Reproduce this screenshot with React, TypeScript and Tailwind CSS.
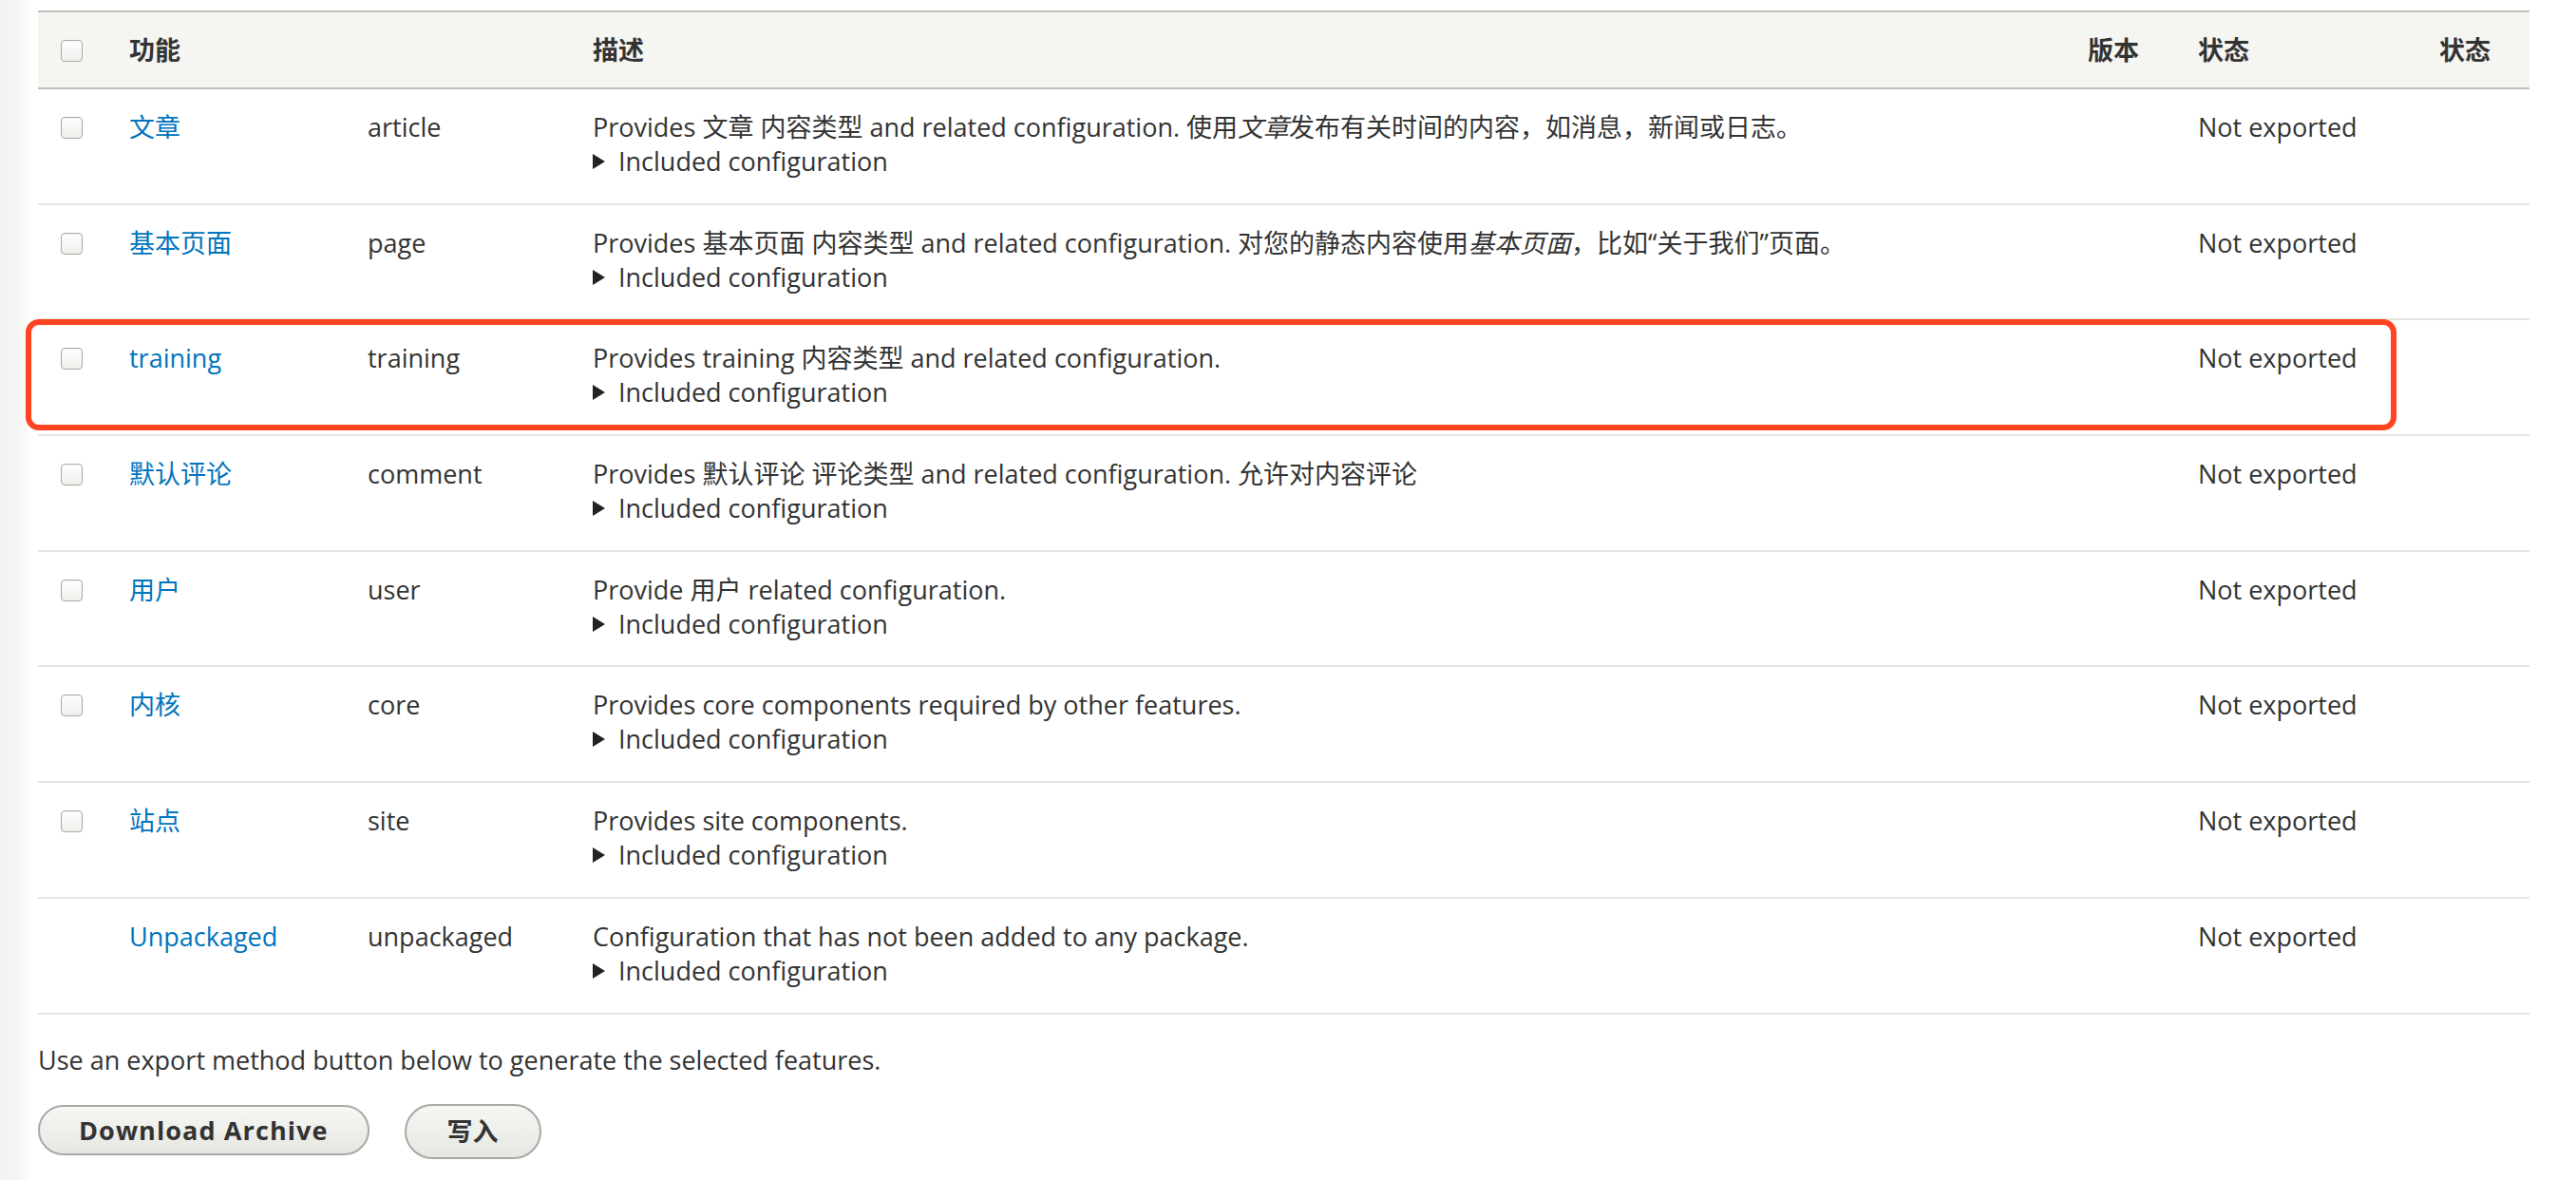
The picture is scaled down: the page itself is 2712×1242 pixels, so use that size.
import { ReactNode } from "react";

type FeatureRow = {
  id: string;
  name: string;
  machine: string;
  description: ReactNode;
  selectable?: boolean;
  highlighted?: boolean;
};

const rows: FeatureRow[] = [
  {
    id: "article",
    name: "文章",
    machine: "article",
    description: (
      <>
        Provides 文章 内容类型 and related configuration. 使用<em>文章</em>发布有关时间的内容，如消息，新闻或日志。
      </>
    ),
  },
  {
    id: "page",
    name: "基本页面",
    machine: "page",
    description: (
      <>
        Provides 基本页面 内容类型 and related configuration. 对您的静态内容使用<em>基本页面</em>，比如“关于我们”页面。
      </>
    ),
  },
  {
    id: "training",
    name: "training",
    machine: "training",
    description: "Provides training 内容类型 and related configuration.",
    highlighted: true,
  },
  {
    id: "comment",
    name: "默认评论",
    machine: "comment",
    description: "Provides 默认评论 评论类型 and related configuration. 允许对内容评论",
  },
  {
    id: "user",
    name: "用户",
    machine: "user",
    description: "Provide 用户 related configuration.",
  },
  {
    id: "core",
    name: "内核",
    machine: "core",
    description: "Provides core components required by other features.",
  },
  {
    id: "site",
    name: "站点",
    machine: "site",
    description: "Provides site components.",
  },
  {
    id: "unpackaged",
    name: "Unpackaged",
    machine: "unpackaged",
    description: "Configuration that has not been added to any package.",
    selectable: false,
  },
];

const grid =
  "grid grid-cols-[96px_251px_237px_1fr_116px_254px_95px]";

function Checkbox({ className = "" }: { className?: string }) {
  return (
    <span
      className={`ml-[24px] block h-[23px] w-[23px] rounded-[4px] border border-[#a9a9a6] bg-[linear-gradient(to_bottom,#ffffff,#eeeeeb)] shadow-[inset_0_1px_1px_rgba(0,0,0,0.05)] ${className}`}
    />
  );
}

function Line({ children, className = "" }: { children: ReactNode; className?: string }) {
  return <div className={`h-[36px] leading-[36px] whitespace-nowrap ${className}`}>{children}</div>;
}

export default function App() {
  return (
    <div
      className="min-h-screen bg-[linear-gradient(to_right,#f3f3f2_0px,#f4f4f3_18px,#ffffff_34px)] pt-[11px] pl-[40px] pr-[49px] text-[27px] text-[#333333]"
      style={{ fontFamily: '"Open Sans", "Noto Sans CJK SC", sans-serif' }}
    >
      {/* header */}
      <div className={`${grid} border-y-2 border-[#c0c0bb] bg-[#f5f5f2] pt-[22px] pb-[21px] font-semibold`}>
        <div>
          <Checkbox className="mt-[7px]" />
        </div>
        <Line>功能</Line>
        <div />
        <Line>描述</Line>
        <Line>版本</Line>
        <Line>状态</Line>
        <Line>状态</Line>
      </div>

      {rows.map((row) => (
        <div
          key={row.id}
          className={`${grid} relative border-b-2 border-[#e5e4df] pt-[22px] pb-[25.7px]`}
        >
          <div>{row.selectable === false ? null : <Checkbox className="mt-[7px]" />}</div>
          <Line className="text-[#0074bd]">{row.name}</Line>
          <Line>{row.machine}</Line>
          <div>
            <Line>{row.description}</Line>
            <Line className="flex items-center">
              <svg width="13" height="16" viewBox="0 0 13 16" className="mr-[14px] shrink-0">
                <path d="M0 0 L13 8 L0 16 Z" fill="#222" />
              </svg>
              Included configuration
            </Line>
          </div>
          <div />
          <Line>Not exported</Line>
          <div />
          {row.highlighted ? (
            <div className="pointer-events-none absolute -top-[1px] bottom-[4px] -left-[13px] right-[140px] rounded-[14px] border-[6px] border-[#ff4421]" />
          ) : null}
        </div>
      ))}

      <p className="mt-[30px] h-[36px] leading-[36px]">
        Use an export method button below to generate the selected features.
      </p>

      <div className="mt-[29px] flex items-start gap-[37px]">
        <button className="h-[53px] rounded-full border-2 border-[#a8a8a6] bg-[linear-gradient(to_bottom,#f6f6f3,#e7e7e2)] px-[41px] font-bold leading-[49px] tracking-[1.1px] text-[#333333]">
          Download Archive
        </button>
        <button className="-mt-[1px] h-[58px] rounded-full border-2 border-[#a8a8a6] bg-[linear-gradient(to_bottom,#f6f6f3,#e7e7e2)] px-[43px] font-bold leading-[54px] text-[#333333]">
          写入
        </button>
      </div>
    </div>
  );
}
